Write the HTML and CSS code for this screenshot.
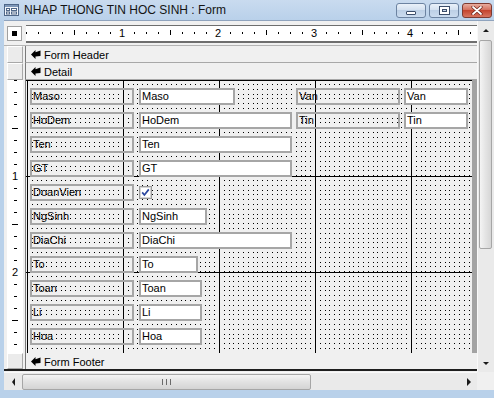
FILE: index.html
```html
<!DOCTYPE html>
<html lang="vi">
<head>
  <meta charset="UTF-8">
  <title>NHAP THONG TIN HOC SINH : Form</title>
  <link rel="stylesheet" href="styles.css">
</head>
<body>
<div class="window">

  <!-- Title bar -->
  <header class="titlebar">
    <svg class="app-icon" width="15" height="12" viewBox="0 0 15 12">
      <rect x="0.5" y="0.5" width="14" height="11" fill="#f2f6fb" stroke="#4f6788"/>
      <rect x="1" y="1" width="13" height="2" fill="#7f98b9"/>
      <rect x="2.5" y="4.5" width="3" height="2" fill="#fff" stroke="#4f6788"/>
      <rect x="7.5" y="4.5" width="5" height="2" fill="#fff" stroke="#4f6788"/>
      <rect x="2.5" y="8" width="3" height="2" fill="#fff" stroke="#4f6788"/>
      <rect x="7.5" y="8" width="5" height="2" fill="#fff" stroke="#4f6788"/>
    </svg>
    <span class="title">NHAP THONG TIN HOC SINH : Form</span>
    <div class="caption-btns">
      <span class="cap-btn min"><i></i></span>
      <span class="cap-btn max"><i></i></span>
      <span class="cap-btn close">
        <svg width="12" height="9" viewBox="0 0 12 9">
          <path d="M2 1 L10 8 M10 1 L2 8" stroke="#6b231a" stroke-width="3.2" stroke-linecap="round"/>
          <path d="M2 1 L10 8 M10 1 L2 8" stroke="#fff" stroke-width="1.8" stroke-linecap="round"/>
        </svg>
      </span>
    </div>
  </header>

  <div class="client">

    <!-- Design surface -->
    <div class="design">
      <div class="ruler-row">
        <div class="selector"><span></span></div>
        <div class="hruler">
          <span class="hnum">1</span>
          <span class="hnum">2</span>
          <span class="hnum">3</span>
          <span class="hnum">4</span>
        </div>
      </div>

      <div class="band">
        <div class="band-sel"></div>
        <div class="band-bar">
          <svg class="band-icon" width="10" height="9" viewBox="0 0 10 9"><polygon points="0,4.5 4.5,0 4.5,2.2 9.5,0.5 9.5,6 4.5,6.6 4.5,9"/></svg>
          Form Header
        </div>
      </div>
      <div class="band band-detail">
        <div class="band-sel"></div>
        <div class="band-bar">
          <svg class="band-icon" width="10" height="9" viewBox="0 0 10 9"><polygon points="0,4.5 4.5,0 4.5,2.2 9.5,0.5 9.5,6 4.5,6.6 4.5,9"/></svg>
          Detail
        </div>
      </div>

      <div class="detail-row">
        <div class="vruler">
          <span class="vnum">1</span>
          <span class="vnum">2</span>
        </div>
        <div class="canvas">
          <div class="row">
            <div class="lbl">Maso</div>
            <div class="cell"><div class="fld w95">Maso</div></div>
            <div class="lbl lbl-r">Van</div>
            <div class="fld fld-r">Van</div>
          </div>
          <div class="row">
            <div class="lbl">HoDem</div>
            <div class="cell"><div class="fld w153">HoDem</div></div>
            <div class="lbl lbl-r">Tin</div>
            <div class="fld fld-r">Tin</div>
          </div>
          <div class="row">
            <div class="lbl">Ten</div>
            <div class="cell"><div class="fld w153">Ten</div></div>
          </div>
          <div class="row">
            <div class="lbl">GT</div>
            <div class="cell"><div class="fld w153">GT</div></div>
          </div>
          <div class="row">
            <div class="lbl">DoanVien</div>
            <div class="cell">
              <svg class="check" width="13" height="13" viewBox="0 0 13 13">
                <rect x="0.5" y="0.5" width="12" height="12" fill="#f4f4f4" stroke="#9c9c9c"/>
                <rect x="1.5" y="1.5" width="10" height="10" fill="#fff" stroke="#d6d6d6"/>
                <path d="M3.2 6.4 L5.4 9 L9.8 3.4" fill="none" stroke="#2b47a0" stroke-width="1.7"/>
              </svg>
            </div>
          </div>
          <div class="row">
            <div class="lbl">NgSinh</div>
            <div class="cell"><div class="fld w68">NgSinh</div></div>
          </div>
          <div class="row">
            <div class="lbl">DiaChi</div>
            <div class="cell"><div class="fld w153">DiaChi</div></div>
          </div>
          <div class="row">
            <div class="lbl">To</div>
            <div class="cell"><div class="fld w59">To</div></div>
          </div>
          <div class="row">
            <div class="lbl">Toan</div>
            <div class="cell"><div class="fld w63">Toan</div></div>
          </div>
          <div class="row">
            <div class="lbl">Li</div>
            <div class="cell"><div class="fld w63">Li</div></div>
          </div>
          <div class="row">
            <div class="lbl">Hoa</div>
            <div class="cell"><div class="fld w63">Hoa</div></div>
          </div>
        </div>
        <div class="offform"></div>
      </div>

      <div class="band band-footer">
        <div class="band-sel"></div>
        <div class="band-bar">
          <svg class="band-icon" width="10" height="9" viewBox="0 0 10 9"><polygon points="0,4.5 4.5,0 4.5,2.2 9.5,0.5 9.5,6 4.5,6.6 4.5,9"/></svg>
          Form Footer
        </div>
      </div>
      <div class="footer-edge"></div>
    </div>

    <!-- Scroll bars -->
    <div class="vscroll">
      <div class="sb-btn"><i class="tri-up"></i></div>
      <div class="vthumb"></div>
      <div class="track"></div>
      <div class="sb-btn"><i class="tri-down"></i></div>
    </div>
    <div class="hscroll">
      <div class="sb-btn sb-left"><i class="tri-left"></i></div>
      <div class="hthumb"><i></i><i></i><i></i></div>
      <div class="track"></div>
      <div class="sb-btn sb-right"><i class="tri-right"></i></div>
    </div>
    <div class="corner"></div>

  </div>
</div>
</body>
</html>
```

FILE: styles.css
```css
/* RESET */
* {
  margin: 0;
  padding: 0;
  box-sizing: border-box;
}

body {
  width: 494px;
  height: 398px;
  overflow: hidden;
  background: #b9d1ea;
  font-family: "Liberation Sans", Arial, sans-serif;
  font-size: 11px;
  color: #000;
}

.window {
  width: 494px;
  height: 398px;
  display: flex;
  flex-direction: column;
}

/* TITLE BAR */
.titlebar {
  height: 20px;
  flex-shrink: 0;
  display: flex;
  align-items: center;
  padding-left: 4px;
  background: linear-gradient(#c9dbef, #b9d1ea);
}

.app-icon {
  display: block;
}

.title {
  margin-left: 5px;
  font-size: 12px;
  color: #141414;
}

.caption-btns {
  display: flex;
  gap: 3px;
  margin-left: auto;
  margin-right: 2px;
  align-self: flex-start;
  margin-top: 3px;
}

.cap-btn {
  width: 30px;
  height: 15px;
  display: flex;
  align-items: center;
  justify-content: center;
  border: 1px solid #6c83a1;
  border-radius: 3px;
  background: linear-gradient(#eaf1f9, #d4e1f0 45%, #bdd0e6 50%, #cbdcef);
}

.cap-btn.close {
  border-color: #7d3a31;
  background: linear-gradient(#e8ad9f, #d4705e 45%, #c4452f 50%, #d77560);
}

.min i {
  width: 10px;
  height: 4px;
  margin-top: 5px;
  border: 1px solid #3c4e6a;
  border-radius: 1px;
  background: #fff;
}

.max i {
  width: 11px;
  height: 9px;
  border: 1px solid #3c4e6a;
  background: #c9d7e9;
  box-shadow: inset 0 0 0 2px #fff, inset 0 0 0 3px #3c4e6a;
}

/* CLIENT AREA */
.client {
  height: 370px;
  margin-left: 4px;
  display: grid;
  grid-template-columns: 473px 17px;
  grid-template-rows: 351px 18px;
  background: #f0f0f0;
  border-top: 1px solid #8fa3bd;
}

.design {
  display: flex;
  flex-direction: column;
  overflow: hidden;
}

/* RULERS */
.ruler-row {
  height: 25px;
  flex-shrink: 0;
  display: flex;
  align-items: flex-start;
  padding-top: 4px;
  border-bottom: 1px solid #b4b4b4;
}

.selector {
  margin: 1px 0 0 3px;
  width: 15px;
  height: 15px;
  display: flex;
  align-items: center;
  justify-content: center;
  background: #fff;
  border: 1px solid #a0a0a0;
}

.selector span {
  width: 5px;
  height: 5px;
  background: #000;
}

.hruler {
  margin-left: 4px;
  flex: 1;
  height: 18px;
  display: flex;
  padding-left: 4px;
  border-top: 1px solid #6e6e6e;
  border-bottom: 2px solid #6e6e6e;
  background-color: #fff;
  background-image:
    linear-gradient(to right, #000 1px, transparent 1px),
    linear-gradient(to right, #000 1px, transparent 1px);
  background-size: 12px 2px, 96px 5px;
  background-position: 0 6px, 48px 4px;
  background-repeat: repeat-x;
}

.hnum {
  width: 8px;
  margin-left: 88px;
  line-height: 15px;
  text-align: center;
  background: #fff;
}

.vruler {
  margin-left: 3px;
  width: 16px;
  display: flex;
  flex-direction: column;
  align-items: center;
  padding-top: 91px;
  gap: 86px;
  background-color: #fff;
  background-image:
    linear-gradient(#000 1px, transparent 1px),
    linear-gradient(#000 1px, transparent 1px);
  background-size: 3px 12px, 6px 96px;
  background-position: 7px 0, 5px 48px;
  background-repeat: repeat-y;
}

.vnum {
  height: 10px;
  line-height: 10px;
  padding: 0 2px;
  background: #fff;
}

/* SECTION BARS */
.band {
  height: 17px;
  flex-shrink: 0;
  display: flex;
}

.band-sel {
  margin-left: 3px;
  width: 16px;
  background: #ebebeb;
  border: 1px solid #fff;
  border-right-color: #a8a8a8;
  border-bottom-color: #a8a8a8;
}

.band-bar {
  margin-left: 2px;
  flex: 1;
  display: flex;
  align-items: center;
  gap: 3px;
  padding-left: 5px;
  padding-top: 1px;
  background: #f0f0f0;
  border-left: 1px solid #7a7a7a;
  border-bottom: 1px solid #a8a8a8;
}

.band-footer {
  height: 16px;
}

.band-footer .band-bar {
  border-bottom: none;
}

.band-icon {
  display: block;
  fill: #000;
}

.footer-edge {
  height: 3px;
  flex-shrink: 0;
  border-top: 2px solid #1e1e1e;
}

/* DETAIL CANVAS */
.detail-row {
  height: 273px;
  flex-shrink: 0;
  display: flex;
}

.canvas {
  margin-left: 2px;
  flex: 1;
  display: flex;
  flex-direction: column;
  gap: 7px;
  padding: 8px 0 0 4px;
  border-left: 1px solid #7a7a7a;
  background-color: #f0f0f0;
  background-image:
    linear-gradient(to right, #000 1px, transparent 1px),
    linear-gradient(#000 1px, transparent 1px),
    linear-gradient(to right, #000 0 1px, #f0f0f0 1px 5px, #000 5px 6px, #f0f0f0 6px 10px, #000 10px 11px, #f0f0f0 11px 14px, #000 14px 15px, #f0f0f0 15px 19px, #000 19px 20px, #f0f0f0 20px),
    linear-gradient(#000 0 1px, #f0f0f0 1px 5px, #000 5px 6px, #f0f0f0 6px 10px, #000 10px 11px, #f0f0f0 11px 14px, #000 14px 15px, #f0f0f0 15px 19px, #000 19px 20px, #f0f0f0 20px);
  background-size: 96px 100%, 100% 96px, 24px 24px, 24px 24px;
  background-position: 1px 0, 0 0, 1px 4px, 1px 4px;
  background-repeat: repeat-x, repeat-y, repeat, repeat;
  background-blend-mode: normal, normal, lighten, normal;
}

.offform {
  width: 5px;
  background: #a3a3a3;
}

.row {
  height: 17px;
  flex-shrink: 0;
  display: flex;
}

.lbl,
.fld {
  height: 17px;
  padding-left: 1px;
  line-height: 13px;
  border: 2px solid #a6a6a6;
  white-space: nowrap;
}

.lbl {
  width: 104px;
}

.fld {
  background: #fff;
}

.cell {
  width: 153px;
  margin-left: 5px;
}

.lbl-r {
  margin-left: 4px;
}

.fld-r {
  width: 64px;
  margin-left: 4px;
}

.w153 { width: 153px; }
.w95 { width: 96px; }
.w68 { width: 68px; }
.w63 { width: 63px; }
.w59 { width: 59px; }

.check {
  display: block;
  margin-top: 2px;
}

/* SCROLL BARS */
.vscroll {
  grid-column: 2;
  grid-row: 1;
  display: flex;
  flex-direction: column;
  background: #eaeaea;
  border-left: 1px solid #f9f9f9;
}

.hscroll {
  grid-column: 1;
  grid-row: 2;
  display: flex;
  align-items: center;
  background: #eaeaea;
  border-top: 1px solid #f9f9f9;
}

.sb-btn {
  height: 18px;
  flex-shrink: 0;
  display: flex;
  align-items: center;
  justify-content: center;
}

.sb-left {
  width: 18px;
}

.sb-right {
  width: 17px;
}

.track {
  flex: 1;
}

.vthumb {
  height: 209px;
  flex-shrink: 0;
  margin: 1px 2px 0 1px;
  border: 1px solid #a6a6a6;
  border-radius: 2px;
  background: linear-gradient(to right, #f4f4f4, #e4e4e4 50%, #d6d6d6);
}

.hthumb {
  width: 289px;
  height: 16px;
  display: flex;
  align-items: center;
  justify-content: center;
  gap: 1px;
  border: 1px solid #a6a6a6;
  border-radius: 2px;
  background: linear-gradient(#f4f4f4, #e2e2e2 50%, #d4d4d4);
}

.hthumb i {
  width: 1px;
  height: 6px;
  margin: 0 1px;
  background: #6a6a6a;
}

.tri-up,
.tri-down {
  border-left: 3px solid transparent;
  border-right: 3px solid transparent;
}

.tri-up {
  border-bottom: 3px solid #1a1a1a;
}

.tri-down {
  border-top: 3px solid #1a1a1a;
}

.tri-left,
.tri-right {
  border-top: 4px solid transparent;
  border-bottom: 4px solid transparent;
}

.tri-left {
  border-right: 3px solid #1a1a1a;
}

.tri-right {
  border-left: 4px solid #1a1a1a;
}

.corner {
  grid-column: 2;
  grid-row: 2;
  background: #f0f0f0;
}
```
